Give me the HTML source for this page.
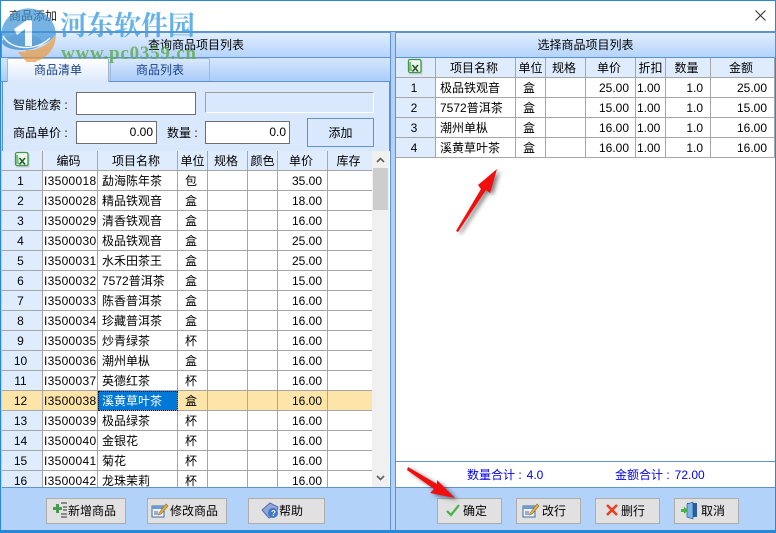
<!DOCTYPE html>
<html><head><meta charset="utf-8"><style>
html,body{margin:0;padding:0}
body{width:776px;height:533px;position:relative;overflow:hidden;background:#fff;font:12px/20px "Liberation Sans","WenQuanYi Zen Hei","Noto Sans CJK SC",sans-serif;color:#000}
.a{position:absolute;box-sizing:border-box}
.hd{background:linear-gradient(#e1eeff,#b4d3fb);border:1px solid #5f92d2;text-align:center;line-height:24px}
table{border-spacing:0;table-layout:fixed;border-collapse:separate}
td{box-sizing:border-box;height:20px;padding:2px 0 0 4px;border-right:1px solid #a6a6a6;border-bottom:1px solid #a6a6a6;white-space:nowrap;overflow:hidden;line-height:17px;background:#fff}
tr.h td{background:#dfecfd;text-align:center;height:20px;padding:2px 3px 0 0}
td.n{background:#dfecfd;text-align:center;padding:2px 3px 0 0}
td.c{text-align:center;padding:2px 3px 0 0}
td.r{text-align:right;padding:2px 5px 0 0}
td.q{text-align:right;padding:2px 6px 0 0}
td.m{text-align:right;padding:2px 7px 0 0}
td.d{padding:2px 0 0 1px}
td.k{letter-spacing:.3px;padding:2px 0 0 1px}
tr.s td{background:#fde4a8}
tr.s td.sel{background:#0078d7;color:#fff;outline:1px dotted #000;outline-offset:-1px}
.inp{background:#fff;border:1px solid #6e6e6e;text-align:right;padding-right:3px;line-height:21px}
.btn{background:#e1e1e1;border:1px solid #adadad;height:26px;top:498px;line-height:24px}
.btn span{position:absolute;top:0}
.btn svg{position:absolute}
</style></head><body>
<div class="a" style="left:0;top:0;width:776px;height:533px;border:1px solid #2b87d8;border-bottom:3px solid #2b87d8;border-top:1px solid #2b87d8"></div>
<div class="a" style="left:1px;top:31px;width:774px;height:499px;background:#b3d2fa;border-top:1px solid #5f92d2"></div>
<div class="a" style="left:9px;top:6px;color:#222">商品添加</div>
<svg class="a" style="left:754px;top:9px" width="13" height="13"><path d="M1.500 1.500L11.500 11.500M11.500 1.500L1.500 11.500" stroke="#333" stroke-width="1.100" fill="none"/></svg>

<div class="a hd" style="left:1px;top:32px;width:390px;height:26px">查询商品项目列表</div>
<div class="a" style="left:1px;top:58px;width:390px;height:24px;background:linear-gradient(#d5e6fd,#aacdf9);border-right:1px solid #5f92d2;border-bottom:1px solid #5f92d2"></div>
<div class="a" style="left:7px;top:58px;width:102px;height:24px;background:linear-gradient(#fff,#dbe9fc);border:1px solid #9fb6d4;border-bottom:0;border-radius:2px 2px 0 0;text-align:center;line-height:22px;color:#17408c;font-size:12px">商品清单</div>
<div class="a" style="left:110px;top:58px;width:100px;height:23px;background:linear-gradient(#d9e8fd,#a9ccf9);border:1px solid #9fb6d4;border-bottom:0;border-radius:2px 2px 0 0;text-align:center;line-height:22px;color:#17408c">商品列表</div>

<div class="a" style="left:2px;top:82px;width:388px;height:69px;background:#d9e8fc;border-left:1px solid #5f92d2;border-right:1px solid #5f92d2"></div>
<div class="a" style="left:13px;top:95px">智能检索 :</div>
<div class="a" style="left:13px;top:123px">商品单价 :</div>
<div class="a" style="left:167px;top:123px">数量 :</div>
<div class="a inp" style="left:76px;top:92px;width:120px;height:23px"></div>
<div class="a" style="left:205px;top:92px;width:169px;height:21px;background:#d9e8fc;border:1px solid;border-color:#a0a0a0 #fff #fff #a0a0a0"></div>
<div class="a inp" style="left:76px;top:121px;width:81px;height:23px">0.00</div>
<div class="a inp" style="left:205px;top:121px;width:85px;height:23px">0.0</div>
<div class="a" style="left:307px;top:118px;width:67px;height:29px;border:1px solid #5f92d2;background:#d9e8fc;text-align:center;line-height:28px">添加</div>

<div class="a" style="left:2px;top:151px;width:388px;height:337px;background:#fff;overflow:hidden">
<table style="width:371px">
<colgroup><col style="width:41px"><col style="width:55px"><col style="width:80px"><col style="width:30px"><col style="width:40px"><col style="width:30px"><col style="width:50px"><col style="width:45px"></colgroup>
<tr class="h"><td></td><td>编码</td><td>项目名称</td><td style="padding:2px 0 0 0">单位</td><td>规格</td><td style="padding:2px 0 0 0">颜色</td><td>单价</td><td>库存</td></tr>
<tr><td class="n">1</td><td class="k">I3500018</td><td>勐海陈年茶</td><td class="c">包</td><td></td><td></td><td class="r">35.00</td><td></td></tr>
<tr><td class="n">2</td><td class="k">I3500028</td><td>精品铁观音</td><td class="c">盒</td><td></td><td></td><td class="r">18.00</td><td></td></tr>
<tr><td class="n">3</td><td class="k">I3500029</td><td>清香铁观音</td><td class="c">盒</td><td></td><td></td><td class="r">16.00</td><td></td></tr>
<tr><td class="n">4</td><td class="k">I3500030</td><td>极品铁观音</td><td class="c">盒</td><td></td><td></td><td class="r">25.00</td><td></td></tr>
<tr><td class="n">5</td><td class="k">I3500031</td><td>水禾田茶王</td><td class="c">盒</td><td></td><td></td><td class="r">25.00</td><td></td></tr>
<tr><td class="n">6</td><td class="k">I3500032</td><td>7572普洱茶</td><td class="c">盒</td><td></td><td></td><td class="r">15.00</td><td></td></tr>
<tr><td class="n">7</td><td class="k">I3500033</td><td>陈香普洱茶</td><td class="c">盒</td><td></td><td></td><td class="r">16.00</td><td></td></tr>
<tr><td class="n">8</td><td class="k">I3500034</td><td>珍藏普洱茶</td><td class="c">盒</td><td></td><td></td><td class="r">16.00</td><td></td></tr>
<tr><td class="n">9</td><td class="k">I3500035</td><td>炒青绿茶</td><td class="c">杯</td><td></td><td></td><td class="r">16.00</td><td></td></tr>
<tr><td class="n">10</td><td class="k">I3500036</td><td>潮州单枞</td><td class="c">盒</td><td></td><td></td><td class="r">16.00</td><td></td></tr>
<tr><td class="n">11</td><td class="k">I3500037</td><td>英德红茶</td><td class="c">杯</td><td></td><td></td><td class="r">16.00</td><td></td></tr>
<tr class="s"><td class="n" style="background:#fde4a8">12</td><td class="k">I3500038</td><td class="sel">溪黄草叶茶</td><td class="c">盒</td><td></td><td></td><td class="r">16.00</td><td></td></tr>
<tr><td class="n">13</td><td class="k">I3500039</td><td>极品绿茶</td><td class="c">杯</td><td></td><td></td><td class="r">16.00</td><td></td></tr>
<tr><td class="n">14</td><td class="k">I3500040</td><td>金银花</td><td class="c">杯</td><td></td><td></td><td class="r">16.00</td><td></td></tr>
<tr><td class="n">15</td><td class="k">I3500041</td><td>菊花</td><td class="c">杯</td><td></td><td></td><td class="r">16.00</td><td></td></tr>
<tr><td class="n">16</td><td class="k">I3500042</td><td>龙珠茉莉</td><td class="c">杯</td><td></td><td></td><td class="r">16.00</td><td></td></tr>
</table>
</div>
<div class="a" style="left:2px;top:487px;width:388px;height:1px;background:#5f92d2"></div>
<div class="a" style="left:390px;top:32px;width:1px;height:498px;background:#5f92d2"></div>
<div class="a" style="left:395px;top:32px;width:1px;height:498px;background:#5f92d2"></div>
<div class="a" style="left:372px;top:151px;width:17px;height:336px;background:#f0f0f0"></div>
<div class="a" style="left:373px;top:168px;width:15px;height:42px;background:#cdcdcd"></div>
<svg class="a" style="left:372px;top:151px" width="17" height="336"><path d="M5 11L8.500 7.500L12 11M5 325L8.500 328.500L12 325" stroke="#606060" stroke-width="1.600" fill="none"/></svg>

<div class="a hd" style="left:395px;top:32px;width:381px;height:26px">选择商品项目列表</div>
<div class="a" style="left:396px;top:58px;width:379px;height:403px;background:#fff"></div>
<div class="a" style="left:396px;top:58px;width:379px;overflow:hidden">
<table style="width:379px">
<colgroup><col style="width:40px"><col style="width:80px"><col style="width:30px"><col style="width:40px"><col style="width:50px"><col style="width:30px"><col style="width:45px"><col style="width:64px"></colgroup>
<tr class="h"><td></td><td>项目名称</td><td style="padding:2px 0 0 0">单位</td><td>规格</td><td>单价</td><td style="padding:2px 0 0 0">折扣</td><td>数量</td><td>金额</td></tr>
<tr><td class="n">1</td><td>极品铁观音</td><td class="c">盒</td><td></td><td class="q">25.00</td><td class="d">1.00</td><td class="m">1.0</td><td class="m">25.00</td></tr>
<tr><td class="n">2</td><td>7572普洱茶</td><td class="c">盒</td><td></td><td class="q">15.00</td><td class="d">1.00</td><td class="m">1.0</td><td class="m">15.00</td></tr>
<tr><td class="n">3</td><td>潮州单枞</td><td class="c">盒</td><td></td><td class="q">16.00</td><td class="d">1.00</td><td class="m">1.0</td><td class="m">16.00</td></tr>
<tr><td class="n">4</td><td>溪黄草叶茶</td><td class="c">盒</td><td></td><td class="q">16.00</td><td class="d">1.00</td><td class="m">1.0</td><td class="m">16.00</td></tr>
</table>
</div>
<div class="a" style="left:396px;top:461px;width:379px;height:27px;background:#fff;border-top:1px solid #5f92d2;border-bottom:1px solid #5f92d2"></div>
<div class="a" style="left:467px;top:465px;color:#0000ee">数量合计 :<span style="margin-left:5px">4.0</span></div>
<div class="a" style="left:615px;top:465px;color:#0000ee">金额合计 :<span style="margin-left:5px">72.00</span></div>

<div class="a btn" style="left:46px;width:80px"><svg style="left:3px;top:3px" width="18" height="17"><path d="M3 5H6V2H9V5H12V8H9V11H6V8H3Z" fill="#4a9b50"/><path d="M11 1H17M13 5H17M13 8H17M11 12H17M11 15H17" stroke="#333" stroke-width="1"/></svg><span style="left:21px">新增商品</span></div>
<div class="a btn" style="left:147px;width:80px"><svg style="left:3px;top:3px" width="18" height="17"><rect x="1" y="4" width="12" height="11" fill="#eef3fa" stroke="#44689c"/><path d="M1 4H13V7H1Z" fill="#6f9bd3"/><path d="M3 10H7M3 12H7" stroke="#44689c"/><path d="M8 11L15 2L17 4L10 12L7.500 13Z" fill="#e8b040" stroke="#8a6a20" stroke-width=".6"/></svg><span style="left:22px">修改商品</span></div>
<div class="a btn" style="left:248px;width:77px"><svg style="left:12px;top:2px" width="19" height="19"><path d="M1 9L9 2L17 6L15 14L8 17Z" fill="#8fa6d8" stroke="#5a70b0"/><circle cx="12" cy="12" r="5" fill="#3f78c8"/><text x="10" y="15" font-size="8" font-weight="bold" fill="#fff" font-family="Liberation Sans">?</text></svg><span style="left:30px">帮助</span></div>
<div class="a btn" style="left:437px;width:65px"><svg style="left:7px;top:3px" width="16" height="16"><path d="M2 9L6 13L14 3" stroke="#46b046" stroke-width="2.200" fill="none"/></svg><span style="left:25px">确定</span></div>
<div class="a btn" style="left:516px;width:65px"><svg style="left:5px;top:3px" width="18" height="17"><rect x="1" y="4" width="12" height="11" fill="#eef3fa" stroke="#44689c"/><path d="M1 4H13V7H1Z" fill="#6f9bd3"/><path d="M3 10H7M3 12H7" stroke="#44689c"/><path d="M8 11L15 2L17 4L10 12L7.500 13Z" fill="#e8b040" stroke="#8a6a20" stroke-width=".6"/></svg><span style="left:25px">改行</span></div>
<div class="a btn" style="left:595px;width:65px"><svg style="left:9px;top:4px" width="14" height="14"><path d="M2 2L12 12M12 2L2 12" stroke="#e8402a" stroke-width="2.600"/></svg><span style="left:25px">删行</span></div>
<div class="a btn" style="left:674px;width:65px"><svg style="left:6px;top:2px" width="17" height="19"><path d="M6 2H16V16H6Z" fill="#2a5f9e"/><path d="M6 3L12 1V18L6 16Z" fill="#7fb4e8" stroke="#1f4a80" stroke-width=".6"/><path d="M0 8H3V5.500L7 9.500L3 13V11H0Z" fill="#45b545"/></svg><span style="left:26px">取消</span></div>

<svg class="a" style="left:0;top:0" width="776" height="533">
<g transform="translate(14 152)"><rect x="2.500" y="2.500" width="13" height="13" fill="#aaa" opacity=".5"/><rect x="1.500" y="0.500" width="12.500" height="13" rx="1.500" fill="#f2f7ef" stroke="#3e9a4a" stroke-width="1.300"/><path d="M4 3H2V12H5" fill="#7cc07f"/><path d="M5.500 6L11 12.500M11 6L5.500 12.500" stroke="#1d5f2a" stroke-width="1.600"/></g>
<g transform="translate(407 59)"><rect x="2.500" y="2.500" width="13" height="13" fill="#aaa" opacity=".5"/><rect x="1.500" y="0.500" width="12.500" height="13" rx="1.500" fill="#f2f7ef" stroke="#3e9a4a" stroke-width="1.300"/><path d="M4 3H2V12H5" fill="#7cc07f"/><path d="M5.500 6L11 12.500M11 6L5.500 12.500" stroke="#1d5f2a" stroke-width="1.600"/></g>
<g style="filter:drop-shadow(3px 2px 2px rgba(0,0,0,.5))"><path d="M456 231L481 189L478 185L497 169L490 193L486 190L458 232Z" fill="#f00e0e"/>
<path d="M408 467L437 484L437 480L455 498L430 493L434 489L407 470Z" fill="#f00e0e"/></g>
<g opacity=".7">
<path d="M1 38A27.500 27.500 0 0 1 56 34C50 44 40 46 30 46L8 40Z" fill="#3d94d6"/>
<ellipse cx="22" cy="42" rx="20" ry="8" fill="#2f86c8"/>
<path d="M18 52C30 52 48 48 56 34C56 50 44 62 30 62C26 62 22 58 18 52Z" fill="#ee9a3e"/>
<path d="M26 50H36V62H26Z" fill="#ee9a3e"/>
<path d="M14 29L27 20H32V46H25V29L17 35Z" fill="#fff"/>
<path d="M3 36C10 50 36 52 50 38" stroke="#fff" stroke-width="1.500" fill="none"/>
</g>
<text x="60" y="35" font-family="Noto Serif CJK SC,serif" font-weight="700" font-size="27" fill="#3f9fe3" opacity=".8">河东软件园</text>
<text x="61" y="59" font-family="Liberation Serif,serif" font-weight="700" font-size="19" fill="#5faa4a" opacity=".8" textLength="135">www.pc0359.cn</text>
</svg>
</body></html>
